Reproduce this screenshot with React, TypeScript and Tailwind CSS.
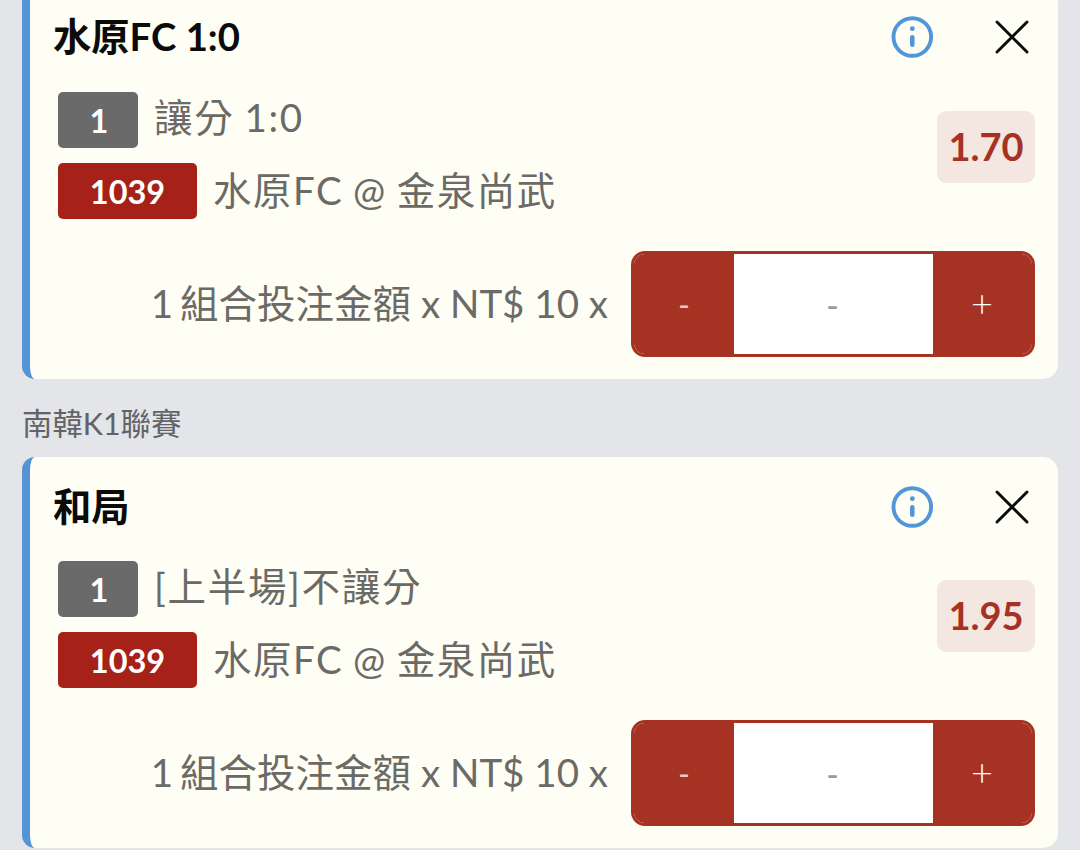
import React, { useState } from 'react';

// 投注單資料
const bets = [
  {
    id: 'handicap',
    title: '水原FC 1:0',
    combo: '1',
    market: '讓分 1:0',
    code: '1039',
    match: '水原FC @ 金泉尚武',
    odds: '1.70',
  },
  {
    id: 'first-half',
    league: '南韓K1聯賽',
    title: '和局',
    combo: '1',
    market: '[上半場]不讓分',
    code: '1039',
    match: '水原FC @ 金泉尚武',
    odds: '1.95',
  },
];

function InfoIcon() {
  return (
    <svg width="42" height="42" viewBox="0 0 42 42" fill="none">
      <circle cx="21.3" cy="21" r="18.8" stroke="#5196d8" strokeWidth="3.9" />
      <circle cx="21.3" cy="12.7" r="2.4" fill="#5196d8" />
      <path d="M21.3 21.2v7.6" stroke="#5196d8" strokeWidth="4.6" strokeLinecap="round" />
    </svg>
  );
}

function CloseIcon() {
  return (
    <svg width="34" height="34" viewBox="0 0 34 34" fill="none">
      <path d="M2 2l30 30M32 2L2 32" stroke="#0b0b0b" strokeWidth="2.9" strokeLinecap="round" />
    </svg>
  );
}

function Stepper() {
  const [count, setCount] = useState(0);

  return (
    <div className="flex h-[106px] w-[404px] overflow-hidden rounded-[14px] border-[3px] border-[#a63224] bg-white text-white">
      <button className="w-[100px] bg-[#a63224] pt-0.5 text-[32px] text-white/75" onClick={() => setCount(Math.max(0, count - 1))}>
        -
      </button>
      <div className="flex flex-1 items-center justify-center pt-px pr-0.5 text-[34px] text-[#9a9a9a]">
        {count > 0 ? count : '-'}
      </div>
      <button className="w-[99px] bg-[#a63224] pr-px pb-1 text-[38px] font-light" onClick={() => setCount(count + 1)}>
        +
      </button>
    </div>
  );
}

function BetCard({ bet }: { bet: any }) {
  return (
    <section className="h-[391px] rounded-l-[13px] rounded-r-[15px] border-l-8 border-[#5494d6] bg-[#fefef4] pr-[23px] pl-[23px]">
      {/* 標題列 */}
      <div className={bet.league ? 'flex h-[98px] items-center pt-0.5' : 'flex h-[98px] items-center'}>
        <h2 className="flex-1 text-[38.3px] font-bold text-[#0b0b0b]">{bet.title}</h2>
        <button className="mr-[62px]" aria-label="說明">
          <InfoIcon />
        </button>
        <button className="mr-1.5" aria-label="移除">
          <CloseIcon />
        </button>
      </div>

      {/* 玩法與賠率 */}
      <div className="flex items-start justify-between pt-1.5 pl-[5px]">
        <div className="flex flex-col gap-[15px] text-[38.5px] leading-[56px] tracking-[1.5px] text-[#6b6a66] [word-spacing:-1.5px]">
          <div className="flex h-14 items-center gap-4">
            <span className="h-14 w-20 rounded-[5px] bg-[#6a6a6a] pt-px pl-0.5 text-center text-[32.5px] font-bold tracking-normal text-white">
              {bet.combo}
            </span>
            <span className="pb-1.5 tracking-[1.7px]">{bet.market}</span>
          </div>
          <div className="flex h-14 items-center gap-4">
            <span className="h-14 w-[139px] rounded-[5px] bg-[#a62117] pt-px text-center text-[32.5px] font-bold tracking-normal text-white">
              {bet.code}
            </span>
            <span className="pb-0.5">{bet.match}</span>
          </div>
        </div>
        <div className="mt-[19px] h-[72px] w-[98px] rounded-[9px] bg-[#f4e7e1] text-center text-[38px] leading-[71px] font-bold text-[#a63224]">
          {bet.odds}
        </div>
      </div>

      {/* 投注金額 */}
      <div className="mt-8 flex items-center justify-end">
        <div className="mr-[23px] flex gap-[7px] text-[38.5px] text-[#6b6a66]">
          <span>1</span>
          <span>組合投注金額 x NT$ 10 x</span>
        </div>
        <Stepper />
      </div>
    </section>
  );
}

export default function App() {
  return (
    <main className="h-[850px] w-[1080px] overflow-hidden bg-[#e3e5e8] pr-[22px] pl-[22px] font-['Lato','Noto_Sans_CJK_TC',sans-serif]">
      <div className="-mt-3">
        {bets.map((bet) => (
          <React.Fragment key={bet.id}>
            {bet.league && (
              <div className="flex h-[78px] items-center pt-3 text-[30.4px] text-[#626366]">{bet.league}</div>
            )}
            <BetCard bet={bet} />
          </React.Fragment>
        ))}
      </div>
    </main>
  );
}
